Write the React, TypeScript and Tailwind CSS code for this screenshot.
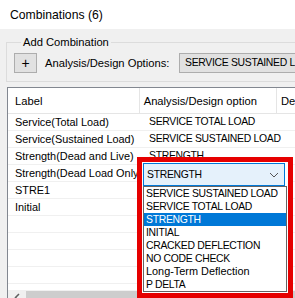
import React from 'react';

const rows: [string, string][] = [
  ['Service(Total Load)', 'SERVICE TOTAL LOAD'],
  ['Service(Sustained Load)', 'SERVICE SUSTAINED LOAD'],
  ['Strength(Dead and Live)', 'STRENGTH'],
  ['Strength(Dead Load Only)', 'STRENGTH'],
  ['STRE1', ''],
  ['Initial', ''],
  ['', ''],
  ['', ''],
  ['', ''],
  ['', ''],
  ['', ''],
];

const options = [
  'SERVICE SUSTAINED LOAD',
  'SERVICE TOTAL LOAD',
  'STRENGTH',
  'INITIAL',
  'CRACKED DEFLECTION',
  'NO CODE CHECK',
  'Long-Term Deflection',
  'P DELTA',
];

// uppercase text in the source font is narrower than Arial's capitals
const caps = 'text-[10.4px] tracking-[-0.3px]';

function Chevron() {
  return (
    <svg width="10" height="6" viewBox="0 0 10 6" fill="none">
      <path d="M1 1l4 4 4-4" stroke="#555" strokeWidth="1" />
    </svg>
  );
}

export default function App() {
  return (
    <div
      className="relative w-[295px] h-[298px] overflow-hidden bg-[#f0f0f0] text-black text-[10.9px] leading-[14px]"
      style={{ fontFamily: '"Liberation Sans", Arial, sans-serif' }}
    >
      {/* title */}
      <div className="h-[29px] bg-white pl-[10px] flex items-center text-[12.2px]">
        Combinations (6)
      </div>

      {/* group box */}
      <div className="pt-[6px] pl-[6px]">
        <fieldset className="w-[330px] border border-[#dcdcdc] pl-[7px] pb-[8px]">
          <legend className="ml-[7px] px-[2px] leading-[14px] text-[11.2px]">Add Combination</legend>
          <div className="flex items-center pt-[4px]">
            <div className="w-[23px] h-[20px] bg-[#e1e1e1] border border-[#adadad] flex items-center justify-center text-[14px]">
              +
            </div>
            <span className="ml-[8px] w-[134px] whitespace-nowrap text-[11.2px]">Analysis/Design Options:</span>
            <div className={'h-[20px] w-[150px] bg-[#e1e1e1] border border-[#adadad] flex items-center pl-[5px] whitespace-nowrap overflow-hidden ' + caps}>
              SERVICE SUSTAINED LOAD
            </div>
          </div>
        </fieldset>
      </div>

      {/* table */}
      <div className="ml-[7px] mt-[5px] w-[330px] border-l border-t border-[#828790] bg-white">
        <div className="flex h-[26px] border-b border-[#e5e5e5] text-[11.2px]">
          <div className="w-[136px] pl-[7px] flex items-center border-r border-[#e5e5e5]">Label</div>
          <div className="w-[142px] pl-[4px] flex items-center border-r border-[#e5e5e5]">
            Analysis/Design option
          </div>
          <div className="pl-[4px] flex items-center">Description</div>
        </div>
        <div className="h-[176px] overflow-hidden">
          {rows.map((r, i) => (
            <div key={i} className="flex h-[17px] border-b border-[#f0f0f0] items-center">
              <div className="w-[136px] pl-[7px] whitespace-nowrap overflow-hidden">{r[0]}</div>
              <div className={'w-[142px] pl-[5px] whitespace-nowrap ' + caps}>{r[1]}</div>
            </div>
          ))}
        </div>
        <div className="flex h-[17px] bg-[#f0f0f0]">
          <div className="w-[18px] flex justify-center pt-[3px]">
            <svg width="6" height="9" viewBox="0 0 6 9" fill="none">
              <path d="M5 1L1.5 4.5 5 8" stroke="#606060" strokeWidth="1.5" />
            </svg>
          </div>
          <div className="flex-1 bg-[#cdcdcd] mt-[1px]" />
        </div>
      </div>

      {/* open dropdown with annotation box */}
      <div className="absolute left-[137px] top-[157px] w-[156px] h-[141px] border-[5px] border-[#e60000] bg-white">
        <div className="ml-[1px] mt-[1px] w-[142px] h-[23px] border border-[#0078d7] bg-[#e5f1fb] flex items-center justify-between pl-[3px] pr-[5px]">
          <span className={caps}>STRENGTH</span>
          <Chevron />
        </div>
        <div className="ml-[1px] w-[144px] border border-[#646464] bg-white">
          {options.map((o) => (
            <div
              key={o}
              className={
                'h-[13px] leading-[13px] pl-[2px] whitespace-nowrap ' +
                (o === o.toUpperCase() ? caps + ' ' : '') +
                (o === 'STRENGTH' ? 'bg-[#0078d7] text-white' : '')
              }
            >
              {o}
            </div>
          ))}
        </div>
      </div>
    </div>
  );
}
